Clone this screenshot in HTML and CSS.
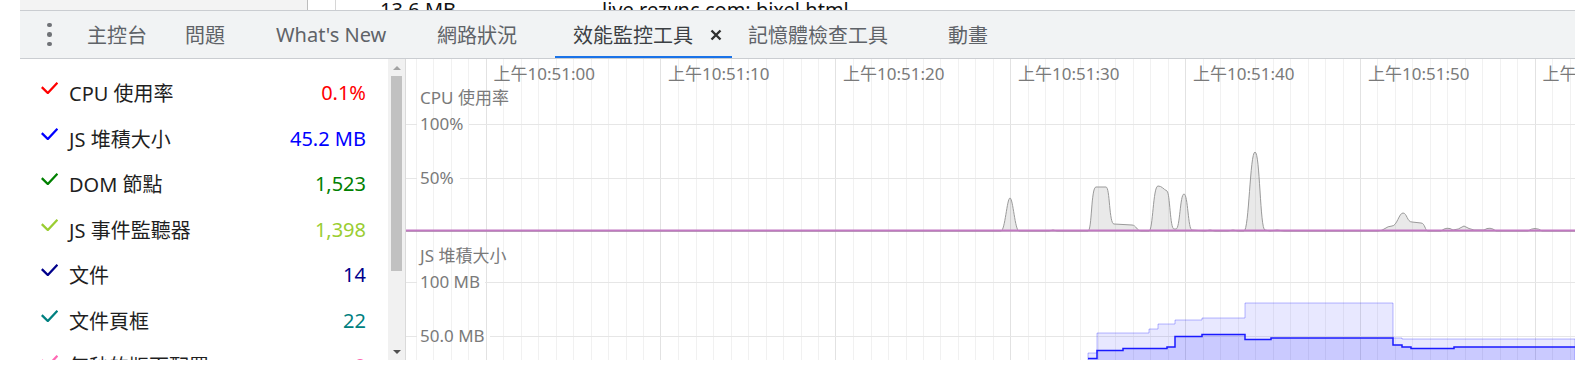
FILE: index.html
```html
<!DOCTYPE html>
<html lang="zh-Hant">
<head>
<meta charset="utf-8">
<title>效能監控工具</title>
<link rel="stylesheet" href="styles.css">
</head>
<body>
<div class="page">
  <div class="topstrip">
    <div class="cell cell-gray"></div>
    <div class="cell cell-narrow"></div>
    <div class="cell cell-main"><span class="size">13.6 MB</span><span class="url">live.rezvnc.com: bixel.html</span></div>
  </div>

  <div class="tabbar">
    <div class="menu"><span class="dot"></span><span class="dot"></span><span class="dot"></span></div>
    <div class="tab">主控台</div>
    <div class="tab">問題</div>
    <div class="tab">What's New</div>
    <div class="tab">網路狀況</div>
    <div class="tab active">效能監控工具<svg class="close" viewBox="0 0 12 12" width="12" height="12"><path d="M1.5 1.5L10.5 10.5M10.5 1.5L1.5 10.5"/></svg></div>
    <div class="tab tab-narrow">記憶體檢查工具</div>
    <div class="tab">動畫</div>
  </div>

  <div class="main">
    <div class="metrics">
      <div class="metric c-red"><svg class="check" viewBox="0 0 17 12" width="17" height="12"><path d="M0.8 5.2L6.8 11L16.4 0.8"/></svg><span class="label">CPU 使用率</span><span class="value">0.1%</span></div>
      <div class="metric c-blue"><svg class="check" viewBox="0 0 17 12" width="17" height="12"><path d="M0.8 5.2L6.8 11L16.4 0.8"/></svg><span class="label">JS 堆積大小</span><span class="value">45.2 MB</span></div>
      <div class="metric c-green"><svg class="check" viewBox="0 0 17 12" width="17" height="12"><path d="M0.8 5.2L6.8 11L16.4 0.8"/></svg><span class="label">DOM 節點</span><span class="value">1,523</span></div>
      <div class="metric c-lime"><svg class="check" viewBox="0 0 17 12" width="17" height="12"><path d="M0.8 5.2L6.8 11L16.4 0.8"/></svg><span class="label">JS 事件監聽器</span><span class="value">1,398</span></div>
      <div class="metric c-navy"><svg class="check" viewBox="0 0 17 12" width="17" height="12"><path d="M0.8 5.2L6.8 11L16.4 0.8"/></svg><span class="label">文件</span><span class="value">14</span></div>
      <div class="metric c-teal"><svg class="check" viewBox="0 0 17 12" width="17" height="12"><path d="M0.8 5.2L6.8 11L16.4 0.8"/></svg><span class="label">文件頁框</span><span class="value">22</span></div>
      <div class="metric c-pink"><svg class="check" viewBox="0 0 17 12" width="17" height="12"><path d="M0.8 5.2L6.8 11L16.4 0.8"/></svg><span class="label">每秒的版面配置</span><span class="value">0</span></div>
    </div>

    <div class="scrollbar">
      <div class="arrow-box"><span class="arrow up"></span></div>
      <div class="thumb"></div>
      <div class="arrow-box bottom"><span class="arrow down"></span></div>
    </div>

    <div class="chart">
      <svg class="plot" width="1169" height="301" viewBox="406 59 1169 301">
        <path class="grid-minor" d="M416.5 59V360M433.5 59V360M451.5 59V360M468.5 59V360M503.5 59V360M521.5 59V360M538.5 59V360M556.5 59V360M573.5 59V360M591.5 59V360M608.5 59V360M626.5 59V360M643.5 59V360M678.5 59V360M696.5 59V360M713.5 59V360M731.5 59V360M748.5 59V360M766.5 59V360M783.5 59V360M801.5 59V360M818.5 59V360M853.5 59V360M871.5 59V360M888.5 59V360M906.5 59V360M923.5 59V360M940.5 59V360M958.5 59V360M975.5 59V360M993.5 59V360M1028.5 59V360M1045.5 59V360M1063.5 59V360M1080.5 59V360M1098.5 59V360M1115.5 59V360M1133.5 59V360M1150.5 59V360M1168.5 59V360M1203.5 59V360M1220.5 59V360M1238.5 59V360M1255.5 59V360M1273.5 59V360M1290.5 59V360M1308.5 59V360M1325.5 59V360M1343.5 59V360M1377.5 59V360M1395.5 59V360M1412.5 59V360M1430.5 59V360M1447.5 59V360M1465.5 59V360M1482.5 59V360M1500.5 59V360M1517.5 59V360M1552.5 59V360M1570.5 59V360"/>
        <path class="grid-major" d="M486.5 59V360M660.5 59V360M835.5 59V360M1010.5 59V360M1185.5 59V360M1360.5 59V360M1535.5 59V360"/>

        <text class="time" x="493.5" y="80">上午10:51:00</text>
        <text class="time" x="668" y="80">上午10:51:10</text>
        <text class="time" x="843" y="80">上午10:51:20</text>
        <text class="time" x="1018" y="80">上午10:51:30</text>
        <text class="time" x="1193" y="80">上午10:51:40</text>
        <text class="time" x="1368" y="80">上午10:51:50</text>
        <text class="time" x="1542.5" y="80">上午10:52:00</text>

        <text class="axis" x="420" y="104">CPU 使用率</text>
        <path class="grid-h" d="M406 124.5H417M469 124.5H1575M406 178.5H417M460 178.5H1575"/>
        <text class="axis" x="420" y="130">100%</text>
        <text class="axis" x="420" y="184">50%</text>

        <path class="cpu" d="M406 231L1001 231C1005 231 1007 198 1010 198C1013 198 1015 231 1019 231L1049 231Q1053 229 1057 231L1088 231C1092 231 1091 187 1096 187L1106 187C1110 187 1109 224 1114 224L1132 225C1136 225 1137 231 1141 231L1149 231C1153 231 1153 186 1158 186C1162 186 1163 189 1167 191C1170 193 1170 229 1174 229L1176 229C1180 229 1180 194 1184 194C1188 194 1188 230 1192 230L1205 231Q1210 229 1215 231L1228 231Q1233 229 1238 231L1244 231C1249 231 1250 152 1255 152C1260 152 1260 230 1265 230L1270 231Q1277 229 1284 231L1378 231C1384 231 1386 226 1392 226C1397 226 1399 213 1403 213C1407 213 1407 222 1412 222L1421 223C1425 223 1425 231 1428 231L1441 231Q1447 226 1453 230Q1458 230 1464 226Q1469 229 1474 230L1484 230Q1490 226 1496 231L1528 231Q1535 226 1542 231L1575 231Z"/>
        <path class="baseline" d="M406 230.5H1575"/>

        <text class="axis" x="420" y="262">JS 堆積大小</text>
        <path class="grid-h" d="M406 282.5H417M485 282.5H1575M406 336.5H417M490 336.5H1575"/>
        <text class="axis" x="420" y="288">100 MB</text>
        <text class="axis" x="420" y="342">50.0 MB</text>

        <path class="heap-total" d="M1088 362L1088 353L1097 353L1097 333L1149 333L1149 329L1158 329L1158 324L1175 324L1175 320L1202 320L1202 318L1245 318L1245 303L1393 303L1393 338L1402 338L1402 339L1575 339L1575 362Z"/>
        <path class="heap-used" d="M1088 362L1088 358L1097 358L1097 350L1123 350L1123 348L1167 348L1167 347L1175 347L1175 336L1202 336L1202 334L1245 334L1245 339L1271 339L1271 338L1393 338L1393 345L1402 345L1402 347L1411 347L1411 348L1454 348L1454 347L1575 347L1575 362Z"/>
        <path class="heap-used-line" d="M1088 358.5L1097 358.5L1097 350.5L1123 350.5L1123 348.5L1167 348.5L1167 347L1175 347L1175 336.5L1202 336.5L1202 334.5L1245 334.5L1245 339.5L1271 339.5L1271 338L1393 338L1393 345L1402 345L1402 347L1411 347L1411 348.5L1454 348.5L1454 347L1575 347"/>
      </svg>
    </div>
  </div>
</div>
</body>
</html>
```

FILE: styles.css
```css
html, body {
  margin: 0;
  padding: 0;
  background: #ffffff;
}

body {
  font-family: "Noto Sans", "Noto Sans CJK TC", sans-serif;
  width: 1575px;
  height: 370px;
  overflow: hidden;
}

.page {
  margin-left: 20px;
}

/* remnant of the page above the DevTools panel */
.topstrip {
  display: flex;
  height: 10px;
  overflow: hidden;
}

.cell {
  height: 10px;
}

.cell-gray {
  width: 287px;
  background: #f3f3f3;
  border-right: 1px solid #bdbdbd;
}

.cell-narrow {
  width: 27px;
  border-right: 1px solid #d6d6d6;
}

.cell-main {
  flex: 1;
  padding-left: 44px;
  font-size: 20px;
  line-height: 20px;
  color: #111;
  white-space: nowrap;
}

.cell-main span {
  display: inline-block;
  margin-top: -9px;
}

.size {
  width: 222px;
}

/* tab strip */
.tabbar {
  display: grid;
  grid-template-columns: 49px 98px 91px 161px 136px 177px 198px 88px;
  height: 47px;
  background: #f1f3f4;
  border-top: 1px solid #cacdd1;
  border-bottom: 1px solid #cacdd1;
}

.menu {
  display: flex;
  flex-direction: column;
  justify-content: center;
  gap: 5px;
  padding-left: 27px;
}

.dot {
  width: 4.5px;
  height: 4.5px;
  border-radius: 50%;
  background: #6f7276;
}

.tab {
  display: flex;
  align-items: center;
  padding-left: 18px;
  font-size: 20px;
  color: #5f6368;
  white-space: nowrap;
}

.tab-narrow {
  padding-left: 16px;
}

.tab.active {
  color: #3c4043;
  box-shadow: inset 0 -2px 0 #1a73e8;
}

.close {
  margin-left: 17px;
  fill: none;
  stroke: #303030;
  stroke-width: 2.4;
}

/* main area */
.main {
  display: flex;
  height: 301px;
  overflow: hidden;
}

.metrics {
  width: 368px;
  box-sizing: border-box;
  padding: 11px 22px 0 21px;
}

.metric {
  display: flex;
  align-items: center;
  height: 45.5px;
  font-size: 20px;
}

.check {
  flex: none;
  margin-right: 11px;
  margin-bottom: 9px;
  fill: none;
  stroke: currentColor;
  stroke-width: 2.3;
}

.label {
  flex: 1;
  color: #1f1f1f;
  white-space: nowrap;
}

.value {
  white-space: nowrap;
}

.c-red { color: #ff0000; }
.c-blue { color: #0000ff; }
.c-green { color: #008000; }
.c-lime { color: #9acd32; }
.c-navy { color: #00008b; }
.c-teal { color: #008080; }
.c-pink { color: #ff69b4; }

.scrollbar {
  width: 17px;
  display: flex;
  flex-direction: column;
  background: #f1f1f1;
}

.arrow-box {
  height: 17px;
  display: flex;
  align-items: center;
  justify-content: center;
}

.arrow-box.bottom {
  margin-top: auto;
}

.arrow {
  width: 0;
  height: 0;
  border-left: 4px solid transparent;
  border-right: 4px solid transparent;
}

.arrow.up {
  border-bottom: 4px solid #a3a3a3;
}

.arrow.down {
  border-top: 4px solid #505050;
}

.thumb {
  height: 195px;
  margin: 0 3px;
  background: #c1c1c1;
}

.chart {
  flex: 1;
  border-left: 1px solid #dadada;
  background: #ffffff;
}

.plot {
  display: block;
}

.plot text {
  font-family: "Noto Sans", "Noto Sans CJK TC", sans-serif;
  font-size: 17px;
  fill: #7a7a7a;
}

.grid-minor {
  stroke: #f1f1f1;
  stroke-width: 1;
}

.grid-major {
  stroke: #e2e2e2;
  stroke-width: 1;
}

.grid-h {
  stroke: #e6e6e6;
  stroke-width: 1;
}

.cpu {
  fill: rgba(0, 0, 0, 0.085);
  stroke: #9a9a9a;
  stroke-width: 1;
}

.baseline {
  stroke: #c278c2;
  stroke-width: 2;
}

.heap-total {
  fill: rgba(0, 0, 255, 0.09);
  stroke: rgba(0, 0, 255, 0.28);
  stroke-width: 1;
}

.heap-used {
  fill: rgba(0, 0, 255, 0.13);
}

.heap-used-line {
  fill: none;
  stroke: #1a1aff;
  stroke-width: 1.5;
}
```
